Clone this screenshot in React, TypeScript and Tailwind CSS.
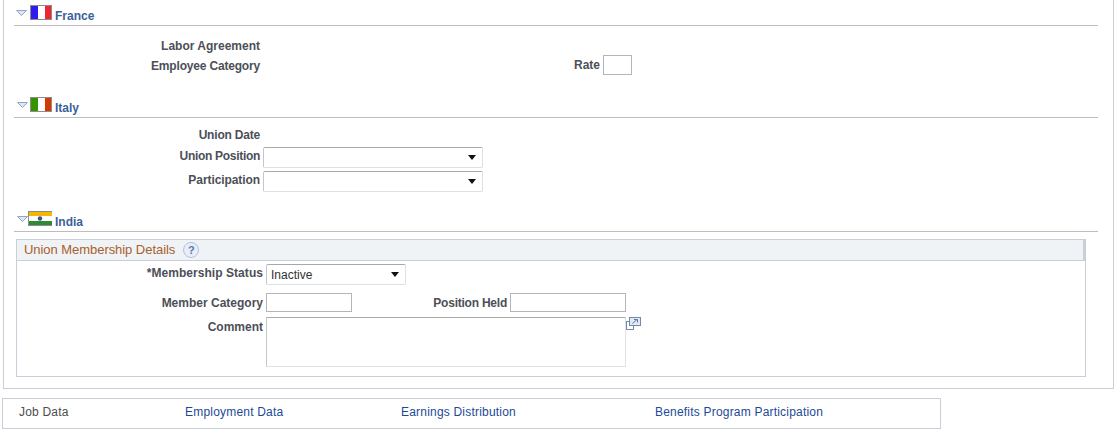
import React from "react";

const Label = ({ w, children, className = "" }: { w: string; children: React.ReactNode; className?: string }) => (
  <div className={`${w} shrink-0 text-right font-bold text-[12px] leading-[14px] text-[#4d4f58] ${className}`}>{children}</div>
);

const Triangle = () => (
  <svg width="11" height="6" viewBox="0 0 11 6" className="shrink-0">
    <path d="M0.5 0.5H10.5L5.5 5.5Z" fill="#dfe7f2" stroke="#8ea5c6" strokeWidth="1" />
  </svg>
);

const Flag = ({ c }: { c: "fr" | "it" | "in" }) => {
  if (c === "in")
    return (
      <svg width="24" height="15" viewBox="0 0 24 15" className="shrink-0">
        <rect width="24" height="15" fill="#8c8c8c" />
        <rect x="1" y="1" width="23" height="4" fill="#f5b800" />
        <rect x="1" y="5" width="23" height="5" fill="#ffffff" />
        <rect x="1" y="10" width="23" height="4" fill="#2f8a35" />
        <circle cx="12" cy="7.5" r="2.2" fill="#39508c" />
      </svg>
    );
  const [a, b] = c === "fr" ? ["#2f1bf0", "#ef2532"] : ["#339400", "#d43900"];
  return (
    <svg width="22" height="15" viewBox="0 0 22 15" className="shrink-0">
      <rect width="22" height="15" fill="#8c8c8c" />
      <rect x="1" y="1" width="7" height="13" fill={a} />
      <rect x="8" y="1" width="7" height="13" fill="#ffffff" />
      <rect x="15" y="1" width="6" height="13" fill={b} />
    </svg>
  );
};

const Section = ({ c, name, left }: { c: "fr" | "it" | "in"; name: string; left: string }) => (
  <div className="h-[22px] ml-[10px] w-[1084px] border-b border-[#bdbdbd] flex items-start">
    <div className={`${left} w-[14px] shrink-0 pt-[6px]`}><Triangle /></div>
    <div className="w-[24px] shrink-0 pt-[1px] flex justify-end"><Flag c={c} /></div>
    <div className="ml-[3px] mt-[5px] font-bold text-[12px] leading-[14px] text-[#3c5f9a]">{name}</div>
  </div>
);

const Select = ({ w, h, value }: { w: string; h: string; value?: string }) => (
  <div className={`${w} ${h} shrink-0 rounded-[2px] border border-[#dcdfe3] border-t-[#a9a9a9] border-l-[#c4c6c9] bg-white flex items-center justify-between pl-[4px] pr-[6px]`}>
    <span className="text-[12px] text-[#333333] leading-[14px]">{value}</span>
    <svg width="8" height="5" viewBox="0 0 8 5"><path d="M0 0H8L4 5Z" fill="#111" /></svg>
  </div>
);

const Input = ({ w }: { w: string }) => (
  <div className={`${w} h-[19px] shrink-0 border border-[#b5b5b5] bg-white`} />
);

const FooterLink = ({ w, children, active }: { w: string; children: React.ReactNode; active?: boolean }) => (
  <div className={`${w} shrink-0 text-[12px] leading-[14px] tracking-[0.2px] ${active ? "text-[#4d4d4d]" : "text-[#1d4a97]"}`}>{children}</div>
);

export default function App() {
  return (
    <div className="w-[1120px] h-[434px] bg-white overflow-hidden font-['Liberation_Sans',Arial,sans-serif]">
      <div className="ml-[3px] w-[1111px] h-[389px] border-l border-r border-b border-[#c9ced8] pt-[4px]">
        <Section c="fr" name="France" left="pl-[2px]" />
        <div className="flex mt-[13px] h-[14px]">
          <Label w="w-[256px]">Labor Agreement</Label>
        </div>
        <div className="flex items-start mt-[2px] h-[41px]">
          <Label w="w-[256px]" className="mt-[4px] tracking-[-0.18px]">Employee Category</Label>
          <Label w="w-[340px]" className="mt-[3px]">Rate</Label>
          <div className="ml-[3px] w-[29px] h-[20px] border border-[#b5b5b5] bg-white" />
        </div>

        <Section c="it" name="Italy" left="pl-[3px]" />
        <div className="mt-[10px] h-[14px] flex">
          <Label w="w-[256px]" className="tracking-[-0.2px]">Union Date</Label>
        </div>
        <div className="mt-[5px] flex items-start h-[24px]">
          <Label w="w-[256px]" className="mt-[2px] tracking-[-0.3px]">Union Position</Label>
          <Select w="ml-[3px] w-[220px]" h="h-[21px]" />
        </div>
        <div className="flex items-start h-[39px]">
          <Label w="w-[256px]" className="mt-[2px] tracking-[-0.08px]">Participation</Label>
          <Select w="ml-[3px] w-[220px]" h="h-[21px]" />
        </div>

        <Section c="in" name="India" left="pl-[3px]" />
        <div className="ml-[12px] mt-[7px] w-[1070px] h-[138px] border border-[#c9ced8]">
          <div className="h-[21px] bg-[#eff3f5] border-b border-[#c9ced8] border-r-2 border-r-[#c9ced8] flex items-center pl-[7px] pb-[1px]">
            <span className="text-[13px] leading-[15px] tracking-[-0.05px] text-[#a8602c]">Union Membership Details</span>
            <span className="ml-[8px] w-[16px] h-[16px] rounded-full border border-[#b4c2de] bg-[#e8eef7] flex items-center justify-center text-[11px] leading-[14px] font-bold text-[#5b76ad]">?</span>
          </div>
          <div className="mt-[3px] flex items-start h-[29px]">
            <Label w="w-[246px]" className="mt-[2px] tracking-[0.05px]">*Membership Status</Label>
            <Select w="ml-[3px] w-[140px]" h="h-[21px]" value="Inactive" />
          </div>
          <div className="flex items-start h-[24px]">
            <Label w="w-[246px]" className="mt-[3px]">Member Category</Label>
            <Input w="ml-[3px] w-[86px]" />
            <Label w="w-[155px]" className="mt-[3px] tracking-[-0.23px]">Position Held</Label>
            <Input w="ml-[3px] w-[116px]" />
          </div>
          <div className="flex items-start">
            <Label w="w-[246px]" className="mt-[3px]">Comment</Label>
            <div className="ml-[3px] w-[360px] h-[50px] shrink-0 border border-[#e0e3e8] border-t-[#a9a9a9] border-l-[#c4c6c9] bg-white" />
            <svg width="15" height="13" viewBox="0 0 15 13" className="shrink-0">
              <rect x="0.5" y="4.5" width="7" height="8" fill="#ffffff" stroke="#7189ab" />
              <rect x="3.5" y="0.5" width="11" height="8" fill="#e3e9f3" stroke="#7189ab" />
              <path d="M6.5 6.5L11 2.5M8 2.5H11.5V5.5" fill="none" stroke="#5f7a9f" strokeWidth="1" />
            </svg>
          </div>
        </div>
      </div>

      <div className="ml-[2px] mt-[9px] w-[939px] h-[31px] border border-[#c9ced8] flex items-center pl-[16px] pb-[3px]">
        <FooterLink w="w-[166px]" active>Job Data</FooterLink>
        <FooterLink w="w-[216px]">Employment Data</FooterLink>
        <FooterLink w="w-[254px]">Earnings Distribution</FooterLink>
        <FooterLink w="w-[250px]">Benefits Program Participation</FooterLink>
      </div>
    </div>
  );
}
